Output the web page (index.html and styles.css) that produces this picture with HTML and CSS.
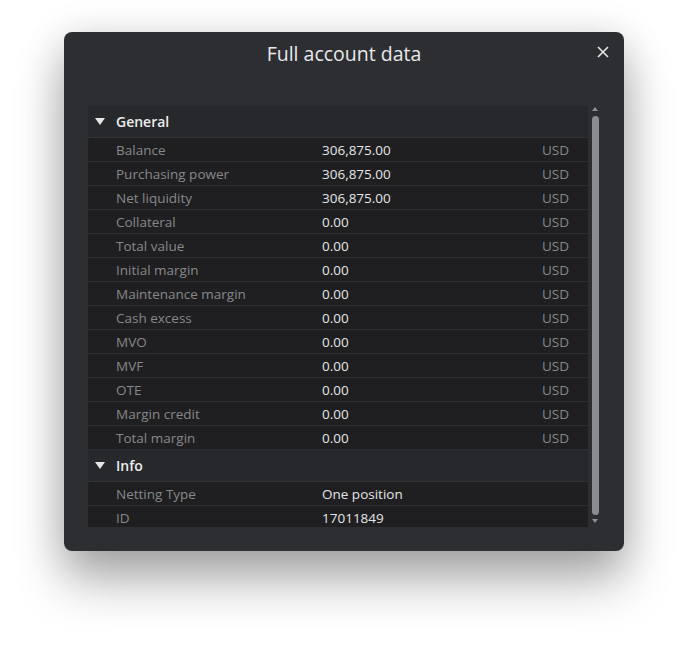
FILE: index.html
```html
<!DOCTYPE html>
<html lang="en">

<head>
    <meta charset="UTF-8">
    <title>Full account data</title>
    <link rel="stylesheet" href="styles.css">
</head>

<body>
    <div class="dialog">
        <div class="dialog-header">
            <h2>Full account data</h2>
            <button class="close" type="button" aria-label="Close">
                <svg width="12" height="12" viewBox="0 0 12 12">
                    <path d="M1 1 L11 11 M11 1 L1 11" stroke="#e6e7e8" stroke-width="1.6" fill="none" />
                </svg>
            </button>
        </div>
        <div class="panel">
            <div class="table">
                <div class="group">
                    <span class="caret"></span>General
                </div>
                <div class="row"><span class="label">Balance</span><span class="value">306,875.00</span><span class="cur">USD</span></div>
                <div class="row"><span class="label">Purchasing power</span><span class="value">306,875.00</span><span class="cur">USD</span></div>
                <div class="row"><span class="label">Net liquidity</span><span class="value">306,875.00</span><span class="cur">USD</span></div>
                <div class="row"><span class="label">Collateral</span><span class="value">0.00</span><span class="cur">USD</span></div>
                <div class="row"><span class="label">Total value</span><span class="value">0.00</span><span class="cur">USD</span></div>
                <div class="row"><span class="label">Initial margin</span><span class="value">0.00</span><span class="cur">USD</span></div>
                <div class="row"><span class="label">Maintenance margin</span><span class="value">0.00</span><span class="cur">USD</span></div>
                <div class="row"><span class="label">Cash excess</span><span class="value">0.00</span><span class="cur">USD</span></div>
                <div class="row"><span class="label">MVO</span><span class="value">0.00</span><span class="cur">USD</span></div>
                <div class="row"><span class="label">MVF</span><span class="value">0.00</span><span class="cur">USD</span></div>
                <div class="row"><span class="label">OTE</span><span class="value">0.00</span><span class="cur">USD</span></div>
                <div class="row"><span class="label">Margin credit</span><span class="value">0.00</span><span class="cur">USD</span></div>
                <div class="row"><span class="label">Total margin</span><span class="value">0.00</span><span class="cur">USD</span></div>
                <div class="group">
                    <span class="caret"></span>Info
                </div>
                <div class="row"><span class="label">Netting Type</span><span class="value">One position</span><span class="cur"></span></div>
                <div class="row"><span class="label">ID</span><span class="value">17011849</span><span class="cur"></span></div>
            </div>
            <div class="scrollbar">
                <span class="arrow up"></span>
                <span class="thumb"></span>
                <span class="arrow down"></span>
            </div>
        </div>
    </div>
</body>

</html>
```

FILE: styles.css
```css
html {
    background: #fff;
}

body {
    margin: 0;
    min-height: 648px;
    box-sizing: border-box;
    padding: 32px 0 0 64px;
    background: #fff;
    font-family: 'Open Sans', 'Noto Sans', sans-serif;
}

.dialog {
    position: relative;
    width: 560px;
    height: 519px;
    background: #2d2e31;
    border-radius: 8px;
    box-shadow: 0 30px 50px rgba(0, 0, 0, 0.3), 0 6px 40px rgba(0, 0, 0, 0.15);
}

.dialog-header {
    height: 42px;
    padding-top: 1px;
}

.dialog-header h2 {
    margin: 0;
    text-align: center;
    font-size: 19.5px;
    font-weight: 400;
    line-height: 42px;
    color: #e8e9ea;
}

.close {
    position: absolute;
    top: 8px;
    right: 9px;
    width: 24px;
    height: 24px;
    padding: 0;
    border: none;
    background: none;
    display: flex;
    align-items: center;
    justify-content: center;
    cursor: pointer;
}

.panel {
    display: flex;
    margin: 31px 0 0 24px;
}

/* scroll view: last row is cut off a bit */
.table {
    width: 500px;
    height: 421px;
    background: #1f1f21;
    border-radius: 4px 4px 0 0;
    overflow: hidden;
}

.group {
    display: flex;
    align-items: center;
    height: 31px;
    padding-left: 7px;
    background: #27282b;
    border-bottom: 1px dotted #3a3b3e;
    color: #eceded;
    font-size: 14px;
    font-weight: 600;
}

.caret {
    width: 0;
    height: 0;
    margin-right: 11px;
    border-left: 5px solid transparent;
    border-right: 5px solid transparent;
    border-top: 7px solid #e6e7e8;
}

.row {
    display: grid;
    grid-template-columns: 206px 1fr auto;
    align-items: center;
    height: 23px;
    padding: 0 19px 0 28px;
    border-bottom: 1px solid #2d2e31;
    font-size: 13.5px;
}

.label,
.cur {
    color: #86888b;
}

.value {
    color: #e4e5e6;
}

.scrollbar {
    display: flex;
    flex-direction: column;
    align-items: center;
    width: 10px;
    margin-left: 2px;
}

.arrow {
    width: 0;
    height: 0;
    border-left: 3px solid transparent;
    border-right: 3px solid transparent;
}

.arrow.up {
    margin-top: 1px;
    border-bottom: 4px solid #8c8f92;
}

.arrow.down {
    margin-top: 4px;
    border-top: 4px solid #8c8f92;
}

.thumb {
    width: 7px;
    height: 399px;
    margin-top: 5px;
    background: #8a8d90;
    border-radius: 4px;
}
```
